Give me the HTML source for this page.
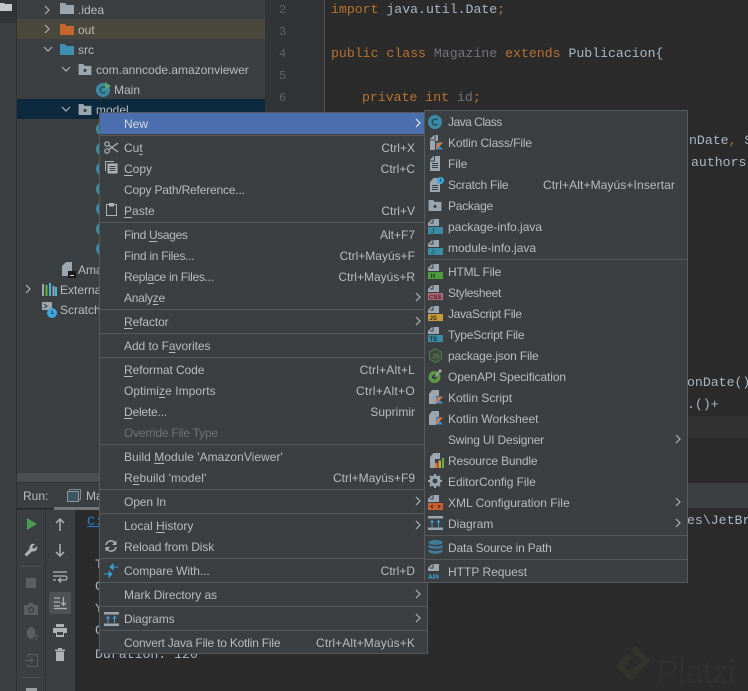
<!DOCTYPE html>
<html><head><meta charset="utf-8"><style>
*{box-sizing:border-box}
html,body{margin:0;padding:0;background:#2b2b2b}
#r{position:relative;width:748px;height:691px;overflow:hidden;background:#2b2b2b;font-family:"Liberation Sans",sans-serif;font-size:12px;color:#bbbbbb;filter:blur(.3px)}
.b{position:absolute}
.t{position:absolute;white-space:nowrap;line-height:20px;height:20px}
.k{position:absolute;white-space:nowrap;line-height:20px;height:20px;text-align:right}
.c{position:absolute;white-space:pre;font-family:"Liberation Mono",monospace;font-size:13.2px;line-height:20px;color:#a9b7c6}
.o{color:#b9722f}.g{color:#72737a}
u{text-decoration-thickness:1px;text-underline-offset:2px}
svg{position:absolute;overflow:visible}
.s{position:absolute;height:1px;background:#55585a}
.d{color:#6f7173}
</style></head><body><div id="r">
<svg width="0" height="0"><defs>
<symbol id="top" viewBox="0 0 16 16"><path d="M4 0H12V7H1V3Z" fill="#9aa7b0" transform="translate(1 0)"/><path d="M5 1V4H2" fill="none" stroke="#3c3f41"/></symbol>
<symbol id="cls" viewBox="0 0 14 14"><circle cx="7" cy="7" r="7" fill="#3b8ba5"/><path d="M9.5 5A3 3 0 1 0 9.5 9" fill="none" stroke="#2b4c5c" stroke-width="1.5"/></symbol>
<symbol id="pkg" viewBox="0 0 14 12"><path d="M0 0H5L6.5 2H14V12H0Z" fill="#9aa7b0"/><circle cx="7" cy="7" r="1.7" fill="#3c3f41"/></symbol>
<symbol id="kot" viewBox="0 0 9 9"><path d="M0 0H9L4.500 4.500L9 9H0Z" fill="#3b8fd0"/><path d="M0 9V4.500L4.500 0H9Z" fill="#e8743b"/></symbol>
<symbol id="right" viewBox="0 0 6 10"><path d="M1 1L5 5L1 9" fill="none" stroke="#afb1b3" stroke-width="1.2"/></symbol>
<symbol id="down" viewBox="0 0 10 6"><path d="M1 1L5 5L9 1" fill="none" stroke="#afb1b3" stroke-width="1.2"/></symbol>
<symbol id="diag" viewBox="0 0 15 14"><rect width="15" height="2.500" fill="#9aa7b0"/><rect y="11.500" width="15" height="2.500" fill="#9aa7b0"/><path d="M4 11V5M2.500 6.500L4 4.500L5.500 6.500M10.500 11V5M9 6.500L10.500 4.500L12 6.500" fill="none" stroke="#3ea3d8"/></symbol>
</defs></svg>

<!-- left strip -->
<div class="b" style="left:0;top:0;width:16px;height:691px;background:#3c3f41"></div>
<div class="b" style="left:0;top:0;width:16px;height:23px;background:#313335"></div>
<svg style="left:0;top:3px" width="12" height="8"><path d="M0 0H4L5 1H12V8H0Z" fill="#c4c6c8"/></svg>
<div class="b" style="left:16px;top:0;width:1px;height:691px;background:#303233"></div>

<!-- project tree -->
<div class="b" style="left:17px;top:0;width:248px;height:473px;background:#3c3f41"></div>
<div class="b" style="left:17px;top:19px;width:248px;height:20px;background:#4a473d"></div>
<div class="b" style="left:17px;top:99px;width:248px;height:20px;background:#0d293e"></div>

<svg style="left:44px;top:5px" width="6" height="10"><use href="#right"/></svg>
<svg style="left:60px;top:3px" width="14" height="11"><path d="M0 0H5L6.500 2H14V11H0Z" fill="#9aa7b0"/></svg>
<div class="t" style="left:78px;top:0">.idea</div>
<svg style="left:44px;top:24px" width="6" height="10"><use href="#right"/></svg>
<svg style="left:60px;top:24px" width="14" height="11"><path d="M0 0H5L6.500 2H14V11H0Z" fill="#c6662f"/></svg>
<div class="t" style="left:78px;top:20px">out</div>
<svg style="left:43px;top:46px" width="10" height="6"><use href="#down"/></svg>
<svg style="left:60px;top:44px" width="14" height="11"><path d="M0 0H5L6.500 2H14V11H0Z" fill="#3f8fb2"/></svg>
<div class="t" style="left:78px;top:40px">src</div>
<svg style="left:61px;top:66px" width="10" height="6"><use href="#down"/></svg>
<svg style="left:78px;top:64px" width="14" height="11"><use href="#pkg"/></svg>
<div class="t" style="left:96px;top:60px">com.anncode.amazonviewer</div>
<svg style="left:96px;top:83px" width="14" height="14"><use href="#cls"/></svg>
<svg style="left:105px;top:82px" width="6" height="8"><path d="M0 0L6 4L0 8Z" fill="#59a869"/></svg>
<div class="t" style="left:114px;top:80px">Main</div>
<svg style="left:61px;top:106px" width="10" height="6"><use href="#down"/></svg>
<svg style="left:78px;top:104px" width="14" height="11"><use href="#pkg"/></svg>
<div class="t" style="left:96px;top:100px">model</div>
<svg style="left:96px;top:122px" width="14" height="14"><use href="#cls"/></svg>
<svg style="left:96px;top:142px" width="14" height="14"><use href="#cls"/></svg>
<svg style="left:96px;top:162px" width="14" height="14"><use href="#cls"/></svg>
<svg style="left:96px;top:182px" width="14" height="14"><use href="#cls"/></svg>
<svg style="left:96px;top:202px" width="14" height="14"><use href="#cls"/></svg>
<svg style="left:96px;top:222px" width="14" height="14"><use href="#cls"/></svg>
<svg style="left:96px;top:242px" width="14" height="14"><use href="#cls"/></svg>
<svg style="left:62px;top:262px" width="14" height="16"><path d="M4 0H10V14H0V4Z" fill="#9aa7b0"/><rect x="6" y="9" width="8" height="7" fill="#1a1a1a"/><rect x="8" y="13" width="4" height="1" fill="#ddd"/></svg>
<div class="t" style="left:78px;top:260px">Amazon</div>
<svg style="left:25px;top:284px" width="6" height="10"><use href="#right"/></svg>
<svg style="left:42px;top:283px" width="15" height="13"><rect x="0" y="1" width="2" height="12" fill="#9aa7b0"/><rect x="3.500" y="2" width="2" height="11" fill="#62b543"/><rect x="7" y="0" width="2" height="13" fill="#40b6e0"/><rect x="10.500" y="3" width="2" height="10" fill="#9aa7b0"/><rect x="13" y="4" width="2" height="9" fill="#40b6e0"/></svg>
<div class="t" style="left:60px;top:280px">External</div>
<svg style="left:42px;top:302px" width="16" height="16"><path d="M0 0H10V8H0Z" fill="#9aa7b0"/><path d="M2 2L5 4L2 6" fill="none" stroke="#3c3f41"/><circle cx="10" cy="11" r="5" fill="#40a8e0"/><path d="M10 8.500V11.500H12" fill="none" stroke="#1d3b4d"/></svg>
<div class="t" style="left:60px;top:300px">Scratch</div>

<!-- gutter + editor -->
<div class="b" style="left:265px;top:0;width:59px;height:473px;background:#313335"></div>
<div class="b" style="left:324px;top:0;width:1px;height:473px;background:#505355"></div>
<div class="c" style="left:279px;top:0;color:#606366;font-size:12px">2</div>
<div class="c" style="left:279px;top:22px;color:#606366;font-size:12px">3</div>
<div class="c" style="left:279px;top:44px;color:#606366;font-size:12px">4</div>
<div class="c" style="left:279px;top:66px;color:#606366;font-size:12px">5</div>
<div class="c" style="left:279px;top:88px;color:#606366;font-size:12px">6</div>
<div class="c" style="left:331px;top:0"><span class="o">import</span> java.util.Date<span class="o">;</span></div>
<div class="c" style="left:331px;top:44px"><span class="o">public class</span> <span class="g">Magazine</span> <span class="o">extends</span> Publicacion{</div>
<div class="c" style="left:362px;top:88px"><span class="o">private int</span> <span class="g">id</span><span class="o">;</span></div>
<div class="c" style="left:689px;top:131px">nDate<span class="o">,</span> S</div>
<div class="c" style="left:691px;top:153px">authors)</div>
<div class="c" style="left:687px;top:373px">onDate()</div>
<div class="c" style="left:687px;top:395px">.()+</div>
<div class="b" style="left:325px;top:416px;width:423px;height:22px;background:#323232"></div>

<!-- splitter + run panel -->
<div class="b" style="left:17px;top:473px;width:410px;height:9px;background:#4b4e50"></div>
<div class="b" style="left:17px;top:483px;width:731px;height:25px;background:#3c3f41"></div>
<div class="b" style="left:17px;top:482px;width:410px;height:1px;background:#323232"></div>
<div class="t" style="left:23px;top:486px">Run:</div>
<svg style="left:67px;top:489px" width="14" height="13"><rect x="2.500" y=".5" width="11" height="10" fill="none" stroke="#7f8b91"/><rect x=".5" y="2.500" width="11" height="10" fill="#3c5560" stroke="#8a979d"/></svg>
<div class="t" style="left:86px;top:486px">Ma</div>
<div class="b" style="left:54px;top:507px;width:48px;height:3px;background:#73777a"></div>

<div class="b" style="left:17px;top:510px;width:58px;height:181px;background:#3c3f41"></div>
<div class="b" style="left:45px;top:510px;width:1px;height:181px;background:#323232"></div>
<div class="b" style="left:17px;top:509px;width:37px;height:1px;background:#323232"></div>
<svg style="left:27px;top:518px" width="10" height="12"><path d="M0 0L10 6L0 12Z" fill="#499c54"/></svg>
<svg style="left:24px;top:543px" width="14" height="14"><path d="M13 3L10 6L8 4L11 1C8 0 5 2 5.500 6L.5 11.500L2.500 13.500L8 8.500C12 9 14 6 13 3Z" fill="#afb1b3"/></svg>
<div class="b" style="left:21px;top:566px;width:20px;height:1px;background:#505355"></div>
<div class="b" style="left:26px;top:578px;width:10px;height:10px;background:#5c5f61"></div>
<svg style="left:24px;top:603px" width="14" height="12"><path d="M0 2H4L5 0H9L10 2H14V12H0Z" fill="#5c5f61"/><circle cx="7" cy="7" r="2.500" fill="none" stroke="#3c3f41" stroke-width="1.200"/></svg>
<svg style="left:24px;top:627px" width="15" height="15"><path d="M3 3L6 0H8L11 3V9L8 12H6L3 9Z" fill="#5c5f61"/><path d="M9 9H15M12 7V13" stroke="#4f5254" stroke-width="1.500"/></svg>
<svg style="left:25px;top:654px" width="13" height="13"><path d="M3 3V.5H12.500V12.500H3V10" fill="none" stroke="#5c5f61"/><path d="M0 6.500H8M5.500 4L8 6.500L5.500 9" fill="none" stroke="#5c5f61"/></svg>
<div class="b" style="left:21px;top:677px;width:20px;height:1px;background:#505355"></div>
<div class="b" style="left:26px;top:688px;width:11px;height:3px;background:#9a9c9e"></div>

<svg style="left:55px;top:518px" width="10" height="13"><path d="M5 13V1M1 5L5 1L9 5" fill="none" stroke="#afb1b3" stroke-width="1.500"/></svg>
<svg style="left:55px;top:544px" width="10" height="13"><path d="M5 0V12M1 8L5 12L9 8" fill="none" stroke="#afb1b3" stroke-width="1.500"/></svg>
<svg style="left:53px;top:571px" width="14" height="13"><path d="M0 1H14M0 5H12C14.500 5 14.500 9 12 9H6M8 7L5.500 9L8 11.500M0 9H3" fill="none" stroke="#afb1b3" stroke-width="1.300"/></svg>
<div class="b" style="left:49px;top:592px;width:22px;height:22px;background:#4e5254;border-radius:2px"></div>
<svg style="left:54px;top:597px" width="13" height="12"><path d="M0 1H6M0 5H6M0 9H6M0 11.500H13M9.500 0V8M7 5.500L9.500 8.500L12 5.500" fill="none" stroke="#afb1b3" stroke-width="1.200"/></svg>
<svg style="left:53px;top:624px" width="14" height="13"><rect x="3" y="0" width="8" height="3" fill="#afb1b3"/><rect x="0" y="4" width="14" height="5" fill="#afb1b3"/><rect x="3" y="9" width="8" height="4" fill="#afb1b3"/><rect x="4" y="8" width="6" height="3" fill="#3c3f41"/></svg>
<svg style="left:55px;top:648px" width="10" height="13"><rect x="3" y="0" width="4" height="1.500" fill="#afb1b3"/><rect x="0" y="1.500" width="10" height="1.500" fill="#afb1b3"/><rect x="1" y="3.500" width="8" height="9.500" fill="#afb1b3"/></svg>

<!-- console -->
<div class="c" style="left:87px;top:512px;color:#287bde;text-decoration:underline">C:</div>
<div class="c" style="left:95px;top:555px">T</div>
<div class="c" style="left:95px;top:577px">C</div>
<div class="c" style="left:95px;top:599px">Y</div>
<div class="c" style="left:95px;top:621px">C</div>
<div class="c" style="left:95px;top:645px">Duration: 120</div>
<div class="c" style="left:687px;top:511px">es\JetBr</div>

<!-- watermark -->
<svg style="left:615px;top:643px" width="36" height="42"><path d="M18 5L31 18L21 28L18 25M18 36L5 23L15 13" fill="none" stroke="#32352c" stroke-width="6"/></svg>
<div class="t" style="left:657px;top:655px;height:34px;line-height:34px;font-size:32px;color:#303030">Platzi</div>

<!-- main menu -->
<div class="b" style="left:99px;top:112px;width:329px;height:542px;background:#3c3f41;border:1px solid #575a5c"></div>
<div class="b" style="left:100px;top:113px;width:327px;height:21px;background:#4b6eaf"></div>
<div class="s" style="left:100px;top:135px;width:327px"></div>
<div class="s" style="left:100px;top:222px;width:327px"></div>
<div class="s" style="left:100px;top:309px;width:327px"></div>
<div class="s" style="left:100px;top:333px;width:327px"></div>
<div class="s" style="left:100px;top:357px;width:327px"></div>
<div class="s" style="left:100px;top:444px;width:327px"></div>
<div class="s" style="left:100px;top:489px;width:327px"></div>
<div class="s" style="left:100px;top:513px;width:327px"></div>
<div class="s" style="left:100px;top:558px;width:327px"></div>
<div class="s" style="left:100px;top:582px;width:327px"></div>
<div class="s" style="left:100px;top:606px;width:327px"></div>
<div class="s" style="left:100px;top:630px;width:327px"></div>

<div class="t" style="left:124px;top:114px;color:#d5d8dc">New</div>
<div class="t" style="left:124px;top:138px">Cu<u>t</u></div>
<div class="t" style="left:124px;top:159px"><u>C</u>opy</div>
<div class="t" style="left:124px;top:180px;letter-spacing:-.18px">Copy Path/Reference...</div>
<div class="t" style="left:124px;top:201px"><u>P</u>aste</div>
<div class="t" style="left:124px;top:225px;letter-spacing:-.35px">Find <u>U</u>sages</div>
<div class="t" style="left:124px;top:246px;letter-spacing:-.27px">Find in Files...</div>
<div class="t" style="left:124px;top:267px;letter-spacing:-.3px">Repl<u>a</u>ce in Files...</div>
<div class="t" style="left:124px;top:288px;letter-spacing:-.25px">Analy<u>z</u>e</div>
<div class="t" style="left:124px;top:312px;letter-spacing:-.1px"><u>R</u>efactor</div>
<div class="t" style="left:124px;top:336px;letter-spacing:-.06px">Add to F<u>a</u>vorites</div>
<div class="t" style="left:124px;top:360px;letter-spacing:-.08px"><u>R</u>eformat Code</div>
<div class="t" style="left:124px;top:381px;letter-spacing:.06px">Optimi<u>z</u>e Imports</div>
<div class="t" style="left:124px;top:402px;letter-spacing:-.2px"><u>D</u>elete...</div>
<div class="t d" style="left:124px;top:423px;letter-spacing:-.22px">Override File Type</div>
<div class="t" style="left:124px;top:447px;letter-spacing:.04px">Build <u>M</u>odule 'AmazonViewer'</div>
<div class="t" style="left:124px;top:468px;letter-spacing:.07px">R<u>e</u>build 'model'</div>
<div class="t" style="left:124px;top:492px;letter-spacing:-.1px">Open In</div>
<div class="t" style="left:124px;top:516px">Local <u>H</u>istory</div>
<div class="t" style="left:124px;top:537px;letter-spacing:-.12px">Reload from Disk</div>
<div class="t" style="left:124px;top:561px;letter-spacing:-.07px">Compare With...</div>
<div class="t" style="left:124px;top:585px;letter-spacing:-.06px">Mark Directory as</div>
<div class="t" style="left:124px;top:609px;letter-spacing:-.1px">Diagrams</div>
<div class="t" style="left:124px;top:633px;letter-spacing:-.2px">Convert Java File to Kotlin File</div>

<div class="k" style="right:333px;top:138px">Ctrl+X</div>
<div class="k" style="right:333px;top:159px">Ctrl+C</div>
<div class="k" style="right:333px;top:201px">Ctrl+V</div>
<div class="k" style="right:333px;top:225px">Alt+F7</div>
<div class="k" style="right:333px;top:246px">Ctrl+Mayús+F</div>
<div class="k" style="right:333px;top:267px">Ctrl+Mayús+R</div>
<div class="k" style="right:333px;top:360px;letter-spacing:.2px">Ctrl+Alt+L</div>
<div class="k" style="right:333px;top:381px;letter-spacing:.3px">Ctrl+Alt+O</div>
<div class="k" style="right:333px;top:402px">Suprimir</div>
<div class="k" style="right:333px;top:468px">Ctrl+Mayús+F9</div>
<div class="k" style="right:333px;top:561px">Ctrl+D</div>
<div class="k" style="right:333px;top:633px;letter-spacing:.12px">Ctrl+Alt+Mayús+K</div>

<svg style="left:415px;top:118px" width="6" height="10"><path d="M1 1L5 5L1 9" fill="none" stroke="#e6e8ea" stroke-width="1.200"/></svg>
<svg style="left:415px;top:292px" width="6" height="10"><use href="#right"/></svg>
<svg style="left:415px;top:316px" width="6" height="10"><use href="#right"/></svg>
<svg style="left:415px;top:496px" width="6" height="10"><use href="#right"/></svg>
<svg style="left:415px;top:520px" width="6" height="10"><use href="#right"/></svg>
<svg style="left:415px;top:589px" width="6" height="10"><use href="#right"/></svg>
<svg style="left:415px;top:613px" width="6" height="10"><use href="#right"/></svg>

<svg style="left:104px;top:141px" width="14" height="13"><circle cx="3" cy="3" r="2.200" fill="none" stroke="#afb1b3" stroke-width="1.200"/><circle cx="3" cy="10" r="2.200" fill="none" stroke="#afb1b3" stroke-width="1.200"/><path d="M5 4.500L14 11M5 8.500L14 2" stroke="#afb1b3" stroke-width="1.200"/></svg>
<svg style="left:105px;top:161px" width="13" height="13"><path d="M.5 10V.5H9" fill="none" stroke="#afb1b3"/><rect x="2.500" y="2.500" width="10" height="10" fill="#afb1b3"/><path d="M4.500 5.500H10.500M4.500 7.500H10.500M4.500 9.500H10.500" stroke="#3c3f41"/></svg>
<svg style="left:106px;top:203px" width="11" height="13"><rect x=".5" y="1.500" width="10" height="11" fill="none" stroke="#afb1b3"/><rect x="3" y="0" width="5" height="3.500" fill="#afb1b3"/></svg>
<svg style="left:105px;top:540px" width="12" height="12"><path d="M1 5A5 5 0 0 1 10 3M11 7A5 5 0 0 1 2 9" fill="none" stroke="#afb1b3" stroke-width="1.500"/><path d="M11.500 .5V5H7ZM.5 11.500V7H5Z" fill="#afb1b3"/></svg>
<svg style="left:104px;top:564px" width="14" height="13"><path d="M14 3H9M9 0V5.500L6 3ZM0 10H5M5 7.500V13L8 10Z" fill="#389fd6" stroke="#389fd6"/></svg>
<svg style="left:104px;top:612px" width="15" height="14"><use href="#diag"/></svg>

<!-- submenu -->
<div class="b" style="left:424px;top:110px;width:264px;height:473px;background:#3c3f41;border:1px solid #575a5c"></div>
<div class="s" style="left:425px;top:259px;width:262px"></div>
<div class="s" style="left:425px;top:535px;width:262px"></div>
<div class="s" style="left:425px;top:559px;width:262px"></div>

<div class="t" style="left:448px;top:112px;letter-spacing:-.5px">Java Class</div>
<div class="t" style="left:448px;top:133px;letter-spacing:-.12px">Kotlin Class/File</div>
<div class="t" style="left:448px;top:154px">File</div>
<div class="t" style="left:448px;top:175px;letter-spacing:-.25px">Scratch File</div>
<div class="t" style="left:448px;top:196px;letter-spacing:-.25px">Package</div>
<div class="t" style="left:448px;top:217px">package-info.java</div>
<div class="t" style="left:448px;top:238px">module-info.java</div>
<div class="t" style="left:448px;top:262px;letter-spacing:-.2px">HTML File</div>
<div class="t" style="left:448px;top:283px;letter-spacing:-.3px">Stylesheet</div>
<div class="t" style="left:448px;top:304px;letter-spacing:-.33px">JavaScript File</div>
<div class="t" style="left:448px;top:325px;letter-spacing:-.2px">TypeScript File</div>
<div class="t" style="left:448px;top:346px;letter-spacing:-.17px">package.json File</div>
<div class="t" style="left:448px;top:367px;letter-spacing:-.1px">OpenAPI Specification</div>
<div class="t" style="left:448px;top:388px">Kotlin Script</div>
<div class="t" style="left:448px;top:409px">Kotlin Worksheet</div>
<div class="t" style="left:448px;top:430px;letter-spacing:-.2px">Swing UI Designer</div>
<div class="t" style="left:448px;top:451px;letter-spacing:-.18px">Resource Bundle</div>
<div class="t" style="left:448px;top:472px;letter-spacing:-.06px">EditorConfig File</div>
<div class="t" style="left:448px;top:493px">XML Configuration File</div>
<div class="t" style="left:448px;top:514px">Diagram</div>
<div class="t" style="left:448px;top:538px;letter-spacing:-.2px">Data Source in Path</div>
<div class="t" style="left:448px;top:562px">HTTP Request</div>
<div class="k" style="right:73px;top:175px;letter-spacing:.1px">Ctrl+Alt+Mayús+Insertar</div>

<svg style="left:675px;top:434px" width="6" height="10"><use href="#right"/></svg>
<svg style="left:675px;top:497px" width="6" height="10"><use href="#right"/></svg>
<svg style="left:675px;top:518px" width="6" height="10"><use href="#right"/></svg>

<svg style="left:428px;top:115px" width="14" height="14"><use href="#cls"/></svg>
<svg style="left:430px;top:135px" width="14" height="15"><path d="M4 0H8V15H0V4Z" fill="#9aa7b0"/><path d="M5 0V5H0" fill="none" stroke="#3c3f41"/><rect x="5" y="6" width="9" height="9" fill="#3c3f41"/><use href="#kot" x="6" y="7" width="7" height="8"/></svg>
<svg style="left:430px;top:156px" width="13" height="15"><path d="M3.500 0H10V15H0V4Z" fill="#9aa7b0"/><path d="M4.500 0V5H0" fill="none" stroke="#3c3f41"/><path d="M2 7.500H8M2 9.500H8M2 11.500H8" stroke="#3c3f41"/></svg>
<svg style="left:430px;top:177px" width="14" height="15"><path d="M3.500 1H10V15H0V5Z" fill="#9aa7b0"/><path d="M2 8.500H8M2 10.500H8M2 12.500H8" stroke="#3c3f41"/><circle cx="10.500" cy="3.500" r="3.500" fill="#40a8e0"/><path d="M10.500 1.500V4H12" fill="none" stroke="#1d3b4d" stroke-width=".8"/></svg>
<svg style="left:428px;top:200px" width="14" height="11"><use href="#pkg"/></svg>
<svg style="left:428px;top:219px" width="15" height="15"><path d="M4 0H11V7H0V4Z" fill="#9aa7b0"/><path d="M5 0V4H2" fill="none" stroke="#3c3f41"/><rect y="8" width="15" height="7" fill="#3b8ba5"/><text x="3" y="14" font-family="Liberation Sans" font-size="6.500" fill="#1c3a48">J</text></svg>
<svg style="left:428px;top:240px" width="15" height="15"><path d="M4 0H11V7H0V4Z" fill="#9aa7b0"/><path d="M5 0V4H2" fill="none" stroke="#3c3f41"/><rect y="8" width="15" height="7" fill="#3b8ba5"/><text x="3" y="14" font-family="Liberation Sans" font-size="6.500" fill="#1c3a48">J</text></svg>
<svg style="left:428px;top:264px" width="15" height="15"><path d="M4 0H11V7H0V4Z" fill="#9aa7b0"/><path d="M5 0V4H2" fill="none" stroke="#3c3f41"/><rect y="8" width="15" height="7" fill="#4e9a3e"/><text x="2.500" y="14" font-family="Liberation Sans" font-weight="700" font-size="6.500" fill="#1f3d1a">H</text></svg>
<svg style="left:428px;top:285px" width="15" height="15"><path d="M4 0H11V7H0V4Z" fill="#9aa7b0"/><path d="M5 0V4H2" fill="none" stroke="#3c3f41"/><rect y="8" width="15" height="7" fill="#b36a78"/><text x="1" y="14" font-family="Liberation Sans" font-weight="700" font-size="6" fill="#3c2226">CSS</text></svg>
<svg style="left:428px;top:306px" width="15" height="15"><path d="M4 0H11V7H0V4Z" fill="#9aa7b0"/><path d="M5 0V4H2" fill="none" stroke="#3c3f41"/><rect y="8" width="15" height="7" fill="#c79a3a"/><text x="1.500" y="14" font-family="Liberation Sans" font-weight="700" font-size="6" fill="#3d2f10">JS</text></svg>
<svg style="left:428px;top:327px" width="15" height="15"><path d="M4 0H11V7H0V4Z" fill="#9aa7b0"/><path d="M5 0V4H2" fill="none" stroke="#3c3f41"/><rect y="8" width="15" height="7" fill="#3b8ba5"/><text x="1.500" y="14" font-family="Liberation Sans" font-weight="700" font-size="6" fill="#16323e">TS</text></svg>
<svg style="left:429px;top:348px" width="13" height="15"><path d="M6.500 .5L12.500 4V11L6.500 14.500L.5 11V4Z" fill="#3f4a3f" stroke="#4e7a4e"/><text x="3" y="10.500" font-family="Liberation Sans" font-size="6.500" fill="#5f9a5f">JS</text></svg>
<svg style="left:428px;top:369px" width="15" height="15"><circle cx="6.500" cy="8" r="6" fill="#5c9a45"/><circle cx="6.500" cy="8" r="2.500" fill="#3c3f41"/><path d="M7 8L12 2" stroke="#afb1b3"/><circle cx="12" cy="2" r="1.500" fill="#afb1b3"/></svg>
<svg style="left:429px;top:390px" width="15" height="15"><path d="M3 0H10V6H7V14H0V4Z" fill="#9aa7b0"/><use href="#kot" x="7" y="6" width="7" height="8"/></svg>
<svg style="left:429px;top:411px" width="15" height="15"><path d="M3 0H10V6H7V14H0V4Z" fill="#9aa7b0"/><use href="#kot" x="7" y="6" width="7" height="8"/></svg>
<svg style="left:430px;top:453px" width="14" height="15"><path d="M3.500 0H10V6H5V15H0V4Z" fill="#9aa7b0"/><rect x="5" y="10" width="2.500" height="5" fill="#e8743b"/><rect x="8.500" y="7.500" width="2.500" height="7.500" fill="#d9a343"/><rect x="12" y="5" width="2" height="10" fill="#62b543"/></svg>
<svg style="left:428px;top:474px" width="14" height="14"><circle cx="7" cy="7" r="4" fill="none" stroke="#9aa7b0" stroke-width="3"/><path d="M7 0V3M7 11V14M0 7H3M11 7H14M2 2L4 4M10 10L12 12M12 2L10 4M4 10L2 12" stroke="#9aa7b0" stroke-width="2"/></svg>
<svg style="left:428px;top:495px" width="15" height="15"><path d="M4 0H11V7H0V4Z" fill="#9aa7b0"/><path d="M5 0V4H2" fill="none" stroke="#3c3f41"/><rect y="8" width="15" height="7" fill="#c75f2f"/><path d="M5 10L3 11.500L5 13M10 10L12 11.500L10 13" fill="none" stroke="#3d1e10"/></svg>
<svg style="left:428px;top:516px" width="15" height="14"><use href="#diag"/></svg>
<svg style="left:428px;top:540px" width="15" height="14"><ellipse cx="7.500" cy="2.500" rx="7" ry="2.500" fill="#3f7d99"/><path d="M.5 4.500C2 7 13 7 14.500 4.500V7C13 9.500 2 9.500 .5 7Z" fill="#3f7d99"/><path d="M.5 9C2 11.500 13 11.500 14.500 9V11.500C13 14.500 2 14.500 .5 11.500Z" fill="#3f7d99"/></svg>
<svg style="left:428px;top:564px" width="15" height="15"><path d="M4 0H11V7H0V4Z" fill="#9aa7b0"/><path d="M5 0V4H2" fill="none" stroke="#3c3f41"/><text x="0" y="15" font-family="Liberation Sans" font-weight="700" font-size="6.500" fill="#40a8e0">API</text></svg>
</div></body></html>
